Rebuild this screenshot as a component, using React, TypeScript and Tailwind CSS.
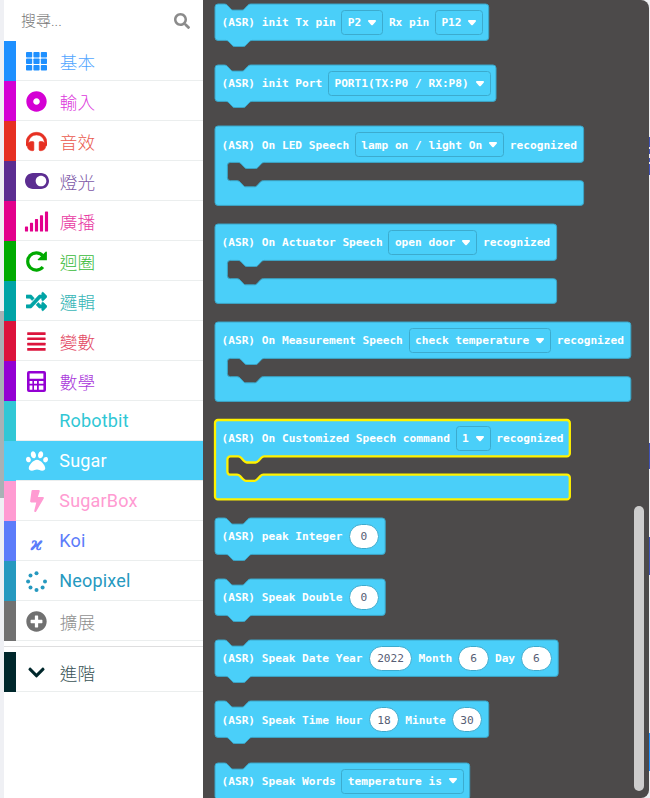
import React from "react";
import {
  FaDotCircle, FaHeadphones, FaToggleOn, FaSignal, FaRandom,
  FaPaw, FaBolt, FaPlusCircle, FaChevronDown, FaSearch,
} from "react-icons/fa";

const Grid = () => (
  <svg viewBox="0 0 21 19" className="h-[19px] w-[21px]" fill="currentColor">
    {[0, 6.5, 13].map((y) =>
      [0, 7.4, 14.8].map((x) => <rect key={`${x}-${y}`} x={x} y={y} width="6.2" height="5.6" rx="0.8" />)
    )}
  </svg>
);

const Redo = () => (
  <svg viewBox="0 0 21 21" className="h-[21px] w-[21px]">
    <path d="M16.9 16A8.6 8.6 0 1 1 16.6 4.6" fill="none" stroke="currentColor" strokeWidth="3.2" />
    <path d="M20.9 1.2V9.3H12.2C11.7 9.3 11.5 8.7 11.9 8.3L19.9.6C20.3.2 20.9.6 20.9 1.2Z" fill="currentColor" />
  </svg>
);

const Bars = () => (
  <svg viewBox="0 0 19 19" className="h-[19px] w-[19px]" fill="currentColor">
    {[0.2, 5.4, 10.7, 16].map((y) => <rect key={y} x="0.2" y={y} width="18.4" height="2.7" rx="0.5" />)}
  </svg>
);

const Dots = () => (
  <svg viewBox="0 0 21 21" className="h-[21px] w-[21px]" fill="currentColor">
    <circle cx="10.5" cy="2.2" r="2" />
    <circle cx="4.5" cy="4.6" r="2" />
    <circle cx="2.1" cy="10.5" r="2" />
    <circle cx="4.5" cy="16.6" r="2" />
    <circle cx="10.5" cy="19" r="2" />
    <circle cx="16.6" cy="16.6" r="2" />
    <circle cx="19" cy="10.5" r="2" />
  </svg>
);

const Calculator = () => (
  <svg viewBox="0 0 19 21" className="h-[21px] w-[19px]">
    <path
      fill="currentColor"
      fillRule="evenodd"
      d="M2 0H17A2 2 0 0 1 19 2V19A2 2 0 0 1 17 21H2A2 2 0 0 1 0 19V2A2 2 0 0 1 2 0ZM2.6 2.4V7.8H16.4V2.4ZM2.6 10V12.7H5.4V10ZM7 10V12.7H10V10ZM11.8 10V12.7H16.4V10ZM2.6 14.5V18.7H5.4V14.5ZM7 14.5V18.7H10V14.5ZM11.8 14.5V18.7H16.4V14.5Z"
    />
  </svg>
);

const Kappa = () => (
  <span className="relative top-[3px] font-['DejaVu_Serif',serif] text-[18px] font-bold italic leading-none">ϰ</span>
);

type Category = { name: string; icon?: React.ReactNode; bar: string; text: string; selected?: boolean };

const categories: Category[] = [
  { name: "基本", icon: <Grid />, bar: "bg-[#1e90ff]", text: "text-[#1e90ff]" },
  { name: "輸入", icon: <FaDotCircle size={21} />, bar: "bg-[#d400d4]", text: "text-[#d400d4]" },
  { name: "音效", icon: <FaHeadphones size={21} stroke="currentColor" strokeWidth={14} />, bar: "bg-[#e63022]", text: "text-[#e63022]" },
  { name: "燈光", icon: <FaToggleOn size={24} />, bar: "bg-[#5c2d91]", text: "text-[#5c2d91]" },
  { name: "廣播", icon: <FaSignal size={25} />, bar: "bg-[#e3008c]", text: "text-[#e3008c]" },
  { name: "迴圈", icon: <Redo />, bar: "bg-[#00aa00]", text: "text-[#00aa00]" },
  { name: "邏輯", icon: <FaRandom size={21} stroke="currentColor" strokeWidth={14} />, bar: "bg-[#00a4a6]", text: "text-[#00a4a6]" },
  { name: "變數", icon: <Bars />, bar: "bg-[#dc143c]", text: "text-[#dc143c]" },
  { name: "數學", icon: <Calculator />, bar: "bg-[#9400d3]", text: "text-[#9400d3]" },
  { name: "Robotbit", bar: "bg-[#31c7d5]", text: "text-[#31c7d5]" },
  { name: "Sugar", icon: <FaPaw size={22} />, bar: "bg-[#4acff9]", text: "text-white", selected: true },
  { name: "SugarBox", icon: <FaBolt size={22} />, bar: "bg-[#ff9bd2]", text: "text-[#ff9bd2]" },
  { name: "Koi", icon: <Kappa />, bar: "bg-[#5c7cfa]", text: "text-[#5c7cfa]" },
  { name: "Neopixel", icon: <Dots />, bar: "bg-[#2699bf]", text: "text-[#2699bf]" },
  { name: "擴展", icon: <FaPlusCircle size={21} />, bar: "bg-[#717171]", text: "text-[#717171]" },
];

const advanced: Category = {
  name: "進階", icon: <FaChevronDown size={19} />, bar: "bg-[#00272b]", text: "text-[#00272b]",
};

function Row({ c }: { c: Category }) {
  const latin = /^[A-Z]/.test(c.name);
  return (
    <div className={`flex h-10 shrink-0 ${c.text}`}>
      <div className={`w-3 shrink-0 ${c.bar}`} />
      <div className={`flex flex-1 items-center border-b border-[#ebeeee] ${c.selected ? "bg-[#4acff9]" : ""}`}>
        <span className="flex w-[41px] shrink-0 justify-center pt-px">{c.icon}</span>
        {latin ? (
          <span className="ml-[2.3px] font-[Roboto,sans-serif] text-[18px] tracking-[0.18px]">{c.name}</span>
        ) : (
          <span className="ml-[2.8px] pt-[2px] font-['Noto_Sans_CJK_TC',sans-serif] text-[17.6px] font-light leading-none opacity-80">
            {c.name}
          </span>
        )}
      </div>
    </div>
  );
}

type Part = { t: string } | { f: string } | { n: string };
type Block = { kind: "stmt" | "wrap"; w: number; parts: Part[]; active?: boolean };

const rec: Part = { t: "recognized" };
const blocks: Block[] = [
  { kind: "stmt", w: 273.7, parts: [{ t: "(ASR) init Tx pin" }, { f: "P2" }, { t: "Rx pin" }, { f: "P12" }] },
  { kind: "stmt", w: 281, parts: [{ t: "(ASR) init Port" }, { f: "PORT1(TX:P0 / RX:P8)" }] },
  { kind: "wrap", w: 368.6, parts: [{ t: "(ASR) On LED Speech" }, { f: "lamp on / light On" }, rec] },
  { kind: "wrap", w: 341.6, parts: [{ t: "(ASR) On Actuator Speech" }, { f: "open door" }, rec] },
  { kind: "wrap", w: 415.8, parts: [{ t: "(ASR) On Measurement Speech" }, { f: "check temperature" }, rec] },
  { kind: "wrap", w: 354.8, parts: [{ t: "(ASR) On Customized Speech command" }, { f: "1" }, rec], active: true },
  { kind: "stmt", w: 170.2, parts: [{ t: "(ASR) peak Integer" }, { n: "0" }] },
  { kind: "stmt", w: 170.2, parts: [{ t: "(ASR) Speak Double" }, { n: "0" }] },
  { kind: "stmt", w: 343.2, parts: [{ t: "(ASR) Speak Date Year" }, { n: "2022" }, { t: "Month" }, { n: "6" }, { t: "Day" }, { n: "6" }] },
  { kind: "stmt", w: 273.7, parts: [{ t: "(ASR) Speak Time Hour" }, { n: "18" }, { t: "Minute" }, { n: "30" }] },
  { kind: "stmt", w: 254.7, parts: [{ t: "(ASR) Speak Words" }, { f: "temperature is" }] },
];

// Connector notch, drawn left to right and right to left
const notch = "c1.4 0 2.2.6 3 1.4l2.7 2.9c.9 1 1.6 1.8 3 1.8h8.8c1.4 0 2.1-.8 3-1.8l2.7-2.9c.8-.8 1.6-1.4 3-1.4";
const notchBack = "c-1.4 0-2.2.6-3 1.4l-2.7 2.9c-.9 1-1.6 1.8-3 1.8h-8.8c-1.4 0-2.1-.8-3-1.8l-2.7-2.9c-.8-.8-1.6-1.4-3-1.4";

function outline(b: Block) {
  const r = b.w;
  if (b.kind === "stmt") {
    return `M0 3a3 3 0 0 1 3-3H9.5${notch}H${r - 3}a3 3 0 0 1 3 3V33.4a3 3 0 0 1-3 3H37.1${notchBack}H3a3 3 0 0 1-3-3Z`;
  }
  return `M0 3a3 3 0 0 1 3-3H${r - 3}a3 3 0 0 1 3 3V33.4a3 3 0 0 1-3 3H49.3${notchBack}H15.4a3 3 0 0 0-3 3V51.7a3 3 0 0 0 3 3H22.1${notch}H${r - 3}a3 3 0 0 1 3 3V76.4a3 3 0 0 1-3 3H3a3 3 0 0 1-3-3Z`;
}

function BlockPart({ p }: { p: Part }) {
  if ("f" in p) {
    return (
      <span className="flex h-[25px] items-center justify-between rounded-[3.5px] border border-[#3cabce] pl-[5.4px] pr-[6px]">
        <span className="pt-[0.6px]">{p.f}</span>
        <svg viewBox="0 0 8 6" className="ml-[6.8px] h-[6px] w-[8px] shrink-0" fill="currentColor">
          <path d="M1.1 0H6.9C7.9 0 8.3 1 7.6 1.8L4.8 4.9C4.3 5.5 3.7 5.5 3.2 4.9L.4 1.8C-.3 1 .1 0 1.1 0Z" />
        </svg>
      </span>
    );
  }
  if ("n" in p) {
    return (
      <span className="mx-[0.4px] flex h-[25px] min-w-[30.4px] items-center justify-center rounded-full border border-[#3cabce] bg-white px-[7.4px] pt-[0.6px] font-normal text-[#575e75]">
        {p.n}
      </span>
    );
  }
  return <span className="pt-[0.6px]">{p.t}</span>;
}

function BlockView({ b }: { b: Block }) {
  return (
    <div className={`relative shrink-0 ${b.kind === "stmt" ? "h-[61.15px]" : "h-[97.9px]"}`}>
      <svg className="absolute left-0 top-0 h-full w-full overflow-visible">
        <path d={outline(b)} fill="#4acff9" stroke={b.active ? "#fff200" : "#3ba5c7"} strokeWidth={b.active ? 2.3 : 1} />
      </svg>
      <div className="relative flex h-[37px] items-center gap-[5.8px] whitespace-pre pl-[6.2px] font-['DejaVu_Sans_Mono',monospace] text-[11.17px] font-bold leading-none text-white">
        {b.parts.map((p, i) => <BlockPart key={i} p={p} />)}
      </div>
    </div>
  );
}

export default function App() {
  return (
    <div className="flex h-[798px] w-[650px] overflow-hidden bg-[#eef0f2]">
      <div className="flex w-1 shrink-0 flex-col bg-[#eff0f4]">
        <div className="mt-[311px] h-[187px] bg-[#a8b1b5]" />
      </div>
      <div className="flex w-[199px] shrink-0 flex-col bg-white">
        <div className="flex h-[41px] shrink-0 items-center justify-between pl-[17px] pr-[13px] text-[#777]">
          <span className="font-['Noto_Sans_CJK_TC',sans-serif] text-[15px] font-light leading-none">
            搜尋<span className="font-[Roboto,sans-serif]">...</span>
          </span>
          <FaSearch size={16} className="text-[#8b8b8b]" />
        </div>
        {categories.map((c) => <Row key={c.name} c={c} />)}
        <div className="mb-[5px] mt-[5px] h-px shrink-0 bg-[#dededf]" />
        <Row c={advanced} />
      </div>
      <div className="flex w-[446px] shrink-0 overflow-hidden rounded-r-lg bg-[#4c4a4a]">
        <div className="flex flex-1 flex-col pl-[12.3px] pt-[4.1px]">
          {blocks.map((b, i) => <BlockView key={i} b={b} />)}
        </div>
        <div className="mr-[5px] mt-[505.5px] h-[285px] w-[10px] shrink-0 rounded-full bg-[#cdcdcd]" />
      </div>
      <div className="flex w-px flex-col">
        <div className="mt-[137px] h-[10px] bg-[#3f51b5]" />
        <div className="mt-[2px] h-[5px] bg-[#3f51b5]" />
        <div className="mt-[4px] h-[4px] bg-[#3f51b5]" />
        <div className="mt-[2px] h-[11px] bg-[#3f51b5]" />
        <div className="mt-[268px] h-[26px] bg-[#3f51b5]" />
        <div className="mt-[68px] h-[38px] bg-[#3f51b5]" />
        <div className="mt-[158px] h-[38px] bg-[#1e90ff]" />
      </div>
    </div>
  );
}
